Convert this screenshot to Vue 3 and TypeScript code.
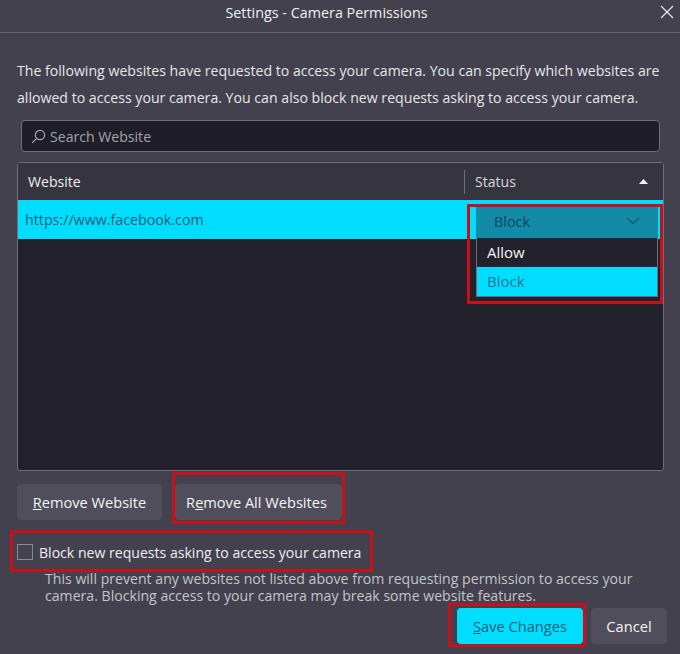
<script setup lang="ts">
const options = ['Allow', 'Block']
</script>

<template>
  <div class="dialog">
    <header class="titlebar">
      <span class="title">Settings - Camera Permissions</span>
      <svg class="close" width="14" height="14" viewBox="0 0 14 14" fill="none" stroke="#e4e4e8" stroke-width="1.3">
        <path d="M1 1l12 12M13 1L1 13" />
      </svg>
    </header>

    <p class="intro">
      The following websites have requested to access your camera. You can specify which websites are<br />
      allowed to access your camera. You can also block new requests asking to access your camera.
    </p>

    <div class="search">
      <svg width="15" height="15" viewBox="0 0 15 15" fill="none" stroke="#a9a9b2" stroke-width="1.2">
        <circle cx="9" cy="6" r="4.6" />
        <path d="M5.7 9.3L1.2 13.8" />
      </svg>
      <span>Search Website</span>
    </div>

    <section class="table">
      <div class="thead">
        <div class="th-site">Website</div>
        <div class="th-status">
          <span>Status</span>
          <svg width="9" height="5" viewBox="0 0 9 5"><path d="M4.5 0L9 5H0z" fill="#f4f4f6" /></svg>
        </div>
      </div>
      <div class="row">
        <span class="url">https://www.facebook.com</span>
        <div class="select">
          <span>Block</span>
          <svg width="14" height="8" viewBox="0 0 14 8" fill="none" stroke="#0d5f78" stroke-width="1.5">
            <path d="M1 1l6 5.5L13 1" />
          </svg>
        </div>
      </div>
      <ul class="menu">
        <li v-for="o in options" :key="o" :class="{ active: o === 'Block' }">{{ o }}</li>
      </ul>
      <div class="mark mark-select"></div>
    </section>

    <div class="actions">
      <button class="btn first"><u>R</u>emove Website</button>
      <button class="btn second">R<u>e</u>move All Websites<span class="mark mark-all"></span></button>
    </div>

    <label class="check">
      <span class="box"></span>
      <span>Block new requests asking to access your camera</span>
      <span class="mark mark-check"></span>
    </label>
    <p class="desc">
      This will prevent any websites not listed above from requesting permission to access your<br />
      camera. Blocking access to your camera may break some website features.
    </p>

    <footer class="footer">
      <button class="btn primary"><u>S</u>ave Changes<span class="mark mark-save"></span></button>
      <button class="btn cancel">Cancel</button>
    </footer>
  </div>
</template>

<style>
html, body { margin: 0; background: #42414d; }
</style>

<style scoped>
.dialog {
  width: 680px;
  height: 654px;
  overflow: hidden;
  box-sizing: border-box;
  background: #42414d;
  color: #f1f1f4;
  font-family: "Open Sans", "Noto Sans", sans-serif;
  font-size: 14.1px;
  display: flex;
  flex-direction: column;
}
.titlebar {
  flex: none;
  border-bottom: 1px solid #65646f;
  display: flex;
  align-items: center;
  justify-content: center;
  position: relative;
  padding-bottom: 8px;
  box-sizing: content-box;
  height: 24px;
}
.title { font-size: 14.35px; color: #f0f0f2; margin-right: 27px; }
.close { position: absolute; right: 6px; top: 5px; }
.intro {
  margin: 24px 0 0 17px;
  font-size: 14.13px;
  line-height: 27px;
  color: #e6e6ea;
  white-space: nowrap;
}
.search {
  margin: 9px 0 0 21px;
  width: 639px;
  height: 32px;
  box-sizing: border-box;
  border: 1px solid #6f6e78;
  border-radius: 4px;
  background: #1f1e28;
  display: flex;
  align-items: center;
  gap: 4px;
  padding-left: 9px;
  color: #a3a3ab;
}
.table {
  position: relative;
  margin: 10px 0 0 17px;
  width: 647px;
  height: 309px;
  box-sizing: border-box;
  border: 1px solid #6f6e78;
  border-radius: 3px;
  background: #23222c;
}
.thead {
  height: 37px;
  background: #35343f;
  display: flex;
  align-items: center;
}
.th-site { width: 446px; padding-left: 10px; box-sizing: border-box; color: #eeeef1; }
.th-status {
  flex: 1;
  height: 24px;
  border-left: 1px solid #6f6e78;
  display: flex;
  align-items: center;
  justify-content: space-between;
  padding: 0 15px 0 10px;
  color: #d8d8de;
}
.row {
  height: 39px;
  background: #00ddff;
  display: flex;
  align-items: center;
  justify-content: space-between;
  color: #0a5f78;
}
.url { margin: 0 0 0 7px; font-size: 14.25px; }
.select {
  width: 182px;
  height: 32px;
  margin: 6px 5px 0 0;
  background: #118ba6;
  color: #0b4560;
  display: flex;
  align-items: center;
  justify-content: space-between;
  box-sizing: border-box;
  padding: 0 18px 3px 18px;
  font-size: 14.4px;
}
.menu {
  position: absolute;
  right: 5px;
  top: 75px;
  width: 182px;
  margin: 0;
  padding: 0;
  list-style: none;
  background: #23222c;
  border: 1px solid #6f6e78;
  border-top: none;
  box-sizing: border-box;
}
.menu li {
  height: 29px;
  line-height: 29px;
  padding-left: 10px;
  font-size: 15px;
  color: #f4f4f6;
}
.menu li.active { background: #00ddff; color: #0b7590; }
.actions {
  display: flex;
  gap: 13px;
  margin: 13px 0 0 17px;
  font-size: 14.6px;
}
.btn {
  position: relative;
  height: 36px;
  border: none;
  border-radius: 4px;
  background: #4f4e5a;
  color: #f4f4f6;
  font: inherit;
  padding: 0;
}
.first { width: 145px; }
.second { width: 167px; padding-right: 4px; }
.check {
  position: relative;
  display: flex;
  align-items: center;
  gap: 6px;
  margin: 22px 0 0 17px;
  width: 350px;
  height: 20px;
  white-space: nowrap;
  color: #eeeef1;
  font-size: 14.08px;
}
.box {
  width: 14px;
  height: 14px;
  flex: none;
  border: 1px solid #8a8992;
  background: #46454f;
}
.desc {
  margin: 8px 0 0 45px;
  line-height: 17px;
  font-size: 14.12px;
  color: #c4c4cb;
  white-space: nowrap;
}
.footer {
  display: flex;
  gap: 8px;
  margin: 4px 0 0 457px;
  font-size: 14.65px;
}
.primary { width: 126px; background: #00ddff; color: #0d5f78; }
.cancel { width: 76px; }
.mark {
  position: absolute;
  box-sizing: border-box;
  border: 3.5px solid #c8101a;
  pointer-events: none;
}
.mark-select { left: 449px; top: 41px; width: 196px; height: 100px; }
.mark-all { left: -3px; top: -12px; width: 173px; height: 52px; }
.mark-check { left: -7px; top: -12px; width: 363px; height: 42px; }
.mark-save { left: -9px; top: -5px; width: 138px; height: 44px; }
</style>
